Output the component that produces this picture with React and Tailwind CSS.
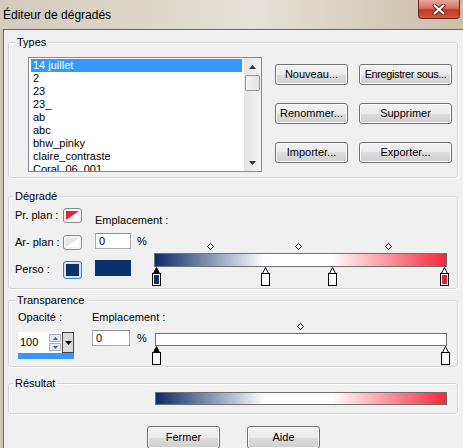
import React from "react";

const GRAD = "bg-[linear-gradient(90deg,#0a2b6a_0%,#ffffff_37.7%,#ffffff_60.6%,#f5283a_100%)]";

function Btn({ children, w = "w-[73px]", h = "h-[21px]", extra = "" }) {
  return (
    <div
      className={`${w} ${h} ${extra} flex items-center justify-center rounded-[3px] border border-[#707070] bg-[linear-gradient(#f2f2f2_0%,#ebebeb_50%,#dddddd_50%,#cfcfcf_100%)] shadow-[inset_0_0_0_1px_#fbfbfb] text-[11px] text-black whitespace-nowrap`}
    >
      {children}
    </div>
  );
}

function Group({ label, className, labelCls, children }) {
  return (
    <div
      className={`relative ml-[4px] w-[450px] shrink-0 rounded-[3px] border border-[#d5d5d5] shadow-[inset_1px_1px_0_#ffffff,1px_1px_0_#ffffff] ${className}`}
    >
      <span className={`absolute -top-[7px] ${labelCls} bg-[#f0f0f0] px-[2px] leading-[13px]`}>{label}</span>
      {children}
    </div>
  );
}

function Diamond() {
  return (
    <svg width="7" height="7" viewBox="0 0 7 7">
      <path d="M3.5 0.5 L6.5 3.5 L3.5 6.5 L0.5 3.5 Z" fill="#fff" stroke="#000" strokeWidth="1" />
    </svg>
  );
}

function Stop({ fill, selected }) {
  return (
    <svg width="9" height="19" viewBox="0 0 9 19">
      <path d="M4.5 0.5 L7.5 6.5 L1.5 6.5 Z" fill={selected ? "#000" : "#fff"} stroke="#000" strokeWidth="1" />
      <rect x="0.5" y="6.5" width="8" height="12" fill="#fff" stroke="#000" strokeWidth="1" />
      <rect x="2" y="8" width="5" height="9" fill={fill} />
    </svg>
  );
}

function Editor({ w, barH, bg, diamonds, stops, diamondOffset }) {
  return (
    <div className={`relative ${w} ${barH}`}>
      <div className={`w-full h-full border border-[#6e6e6e] ${bg}`} />
      {diamonds.map((d, i) => (
        <div key={i} className="absolute" style={{ left: d - 3.5, top: diamondOffset }}>
          <Diamond />
        </div>
      ))}
      {stops.map((s, i) => (
        <div key={i} className="absolute top-full" style={{ left: s.x - 4.5 }}>
          <Stop fill={s.fill} selected={s.sel} />
        </div>
      ))}
    </div>
  );
}

function ListBox() {
  const items = ["14 juillet", "2", "23", "23_", "ab", "abc", "bhw_pinky", "claire_contraste", "Coral_06_001"];
  return (
    <div className="w-[234px] h-[115px] border border-[#828790] bg-white flex">
      <div className="flex-1 overflow-hidden pl-[2px] pr-[2px] pt-[1px]">
        {items.map((it, i) => (
          <div
            key={i}
            className={`h-[13px] leading-[13px] px-[2px] whitespace-nowrap ${i === 0 ? "bg-[#3399ff] text-white" : "text-black"}`}
          >
            {it}
          </div>
        ))}
      </div>
      <div className="w-[17px] flex flex-col bg-[linear-gradient(90deg,#e4e4e4,#f3f3f3)]">
        <div className="h-[17px] flex items-center justify-center">
          <svg width="7" height="4" viewBox="0 0 7 4">
            <path d="M0 4 L3.5 0 L7 4 Z" fill="#333" />
          </svg>
        </div>
        <div className="mx-[1px] h-[16px] rounded-[2px] border border-[#979797] bg-[linear-gradient(90deg,#f3f3f3,#e2e2e2)]" />
        <div className="flex-1" />
        <div className="h-[17px] flex items-center justify-center">
          <svg width="7" height="4" viewBox="0 0 7 4">
            <path d="M0 0 L3.5 4 L7 0 Z" fill="#333" />
          </svg>
        </div>
      </div>
    </div>
  );
}

function Swatch({ kind }) {
  if (kind === "perso") {
    return (
      <div className="w-[19px] h-[18px] rounded-[3px] border border-[#3c7fb1] bg-[#cfe6fa] p-[2px]">
        <div className="w-full h-full border border-[#1a2e4f] bg-[#0b2f6f]" />
      </div>
    );
  }
  const tri = kind === "fg" ? "#ee2233" : "#e6e6e6";
  return (
    <div className="w-[19px] h-[15px] rounded-[3px] border border-[#8b8b8b] bg-[#f4f4f4] p-[2px]">
      <svg width="13" height="9" viewBox="0 0 13 9" className="block">
        <rect x="0" y="0" width="13" height="9" fill="#fff" />
        <path d="M0 0 L13 0 L0 9 Z" fill={tri} />
      </svg>
    </div>
  );
}

function TextBox({ w, children }) {
  return (
    <div className={`${w} h-[16px] bg-white border border-[#abadb3] border-t-[#8e9096] pl-[3px] leading-[14px]`}>
      {children}
    </div>
  );
}

function Spin() {
  return (
    <div className="mt-[2px] w-[56px] flex flex-col">
      <div className="h-[21px] flex bg-white">
        <span className="flex-1 pl-[2px] leading-[21px]">100</span>
        <div className="w-[12px] mr-[1px] flex flex-col justify-center gap-[1px]">
          <div className="h-[8px] border border-[#a9b3bf] bg-[#e3e9f0] flex items-center justify-center">
            <svg width="5" height="3" viewBox="0 0 5 3">
              <path d="M0 3 L2.5 0 L5 3 Z" fill="#555" />
            </svg>
          </div>
          <div className="h-[8px] border border-[#a9b3bf] bg-[#e3e9f0] flex items-center justify-center">
            <svg width="5" height="3" viewBox="0 0 5 3">
              <path d="M0 0 L2.5 3 L5 0 Z" fill="#555" />
            </svg>
          </div>
        </div>
        <div className="w-[12px] h-full border border-[#444] bg-[#dcdcdc] flex items-center justify-center">
          <svg width="7" height="4" viewBox="0 0 7 4">
            <path d="M0 0 L3.5 4 L7 0 Z" fill="#000" />
          </svg>
        </div>
      </div>
      <div className="h-[6px] bg-[#3399ff]" />
    </div>
  );
}

export default function App() {
  return (
    <div className="w-[463px] h-[448px] overflow-hidden flex flex-col font-['Liberation_Sans',Arial,sans-serif] text-[11px] leading-[13px] text-black bg-[#f0f0f0]">
      {/* Title bar */}
      <div className="h-[29px] shrink-0 flex items-start bg-[linear-gradient(90deg,#d3cbbd_0%,#dcd6ca_30%,#e6e2da_55%,#d6cdbc_80%,#c9bfaa_100%)]">
        <span className="pl-[3px] mt-[8px] text-[12px] leading-[15px] text-black">Éditeur de dégradés</span>
        <div className="ml-auto mr-[3px] w-[42px] h-[19px] rounded-b-[4px] border border-t-0 border-[#6b2a20] bg-[linear-gradient(#eaa99b_0%,#d8705f_45%,#c23a28_55%,#d3553f_100%)] flex items-center justify-center">
          <svg width="14" height="11" viewBox="0 0 14 11">
            <path d="M2.5 1.5 L11.5 9.5 M11.5 1.5 L2.5 9.5" stroke="#5a1d15" strokeWidth="4" strokeLinecap="round" />
            <path d="M2.5 1.5 L11.5 9.5 M11.5 1.5 L2.5 9.5" stroke="#fff" strokeWidth="2.2" strokeLinecap="round" />
          </svg>
        </div>
      </div>

      <div className="flex-1 flex">
        <div className="w-[3px] bg-[#cfc6b5]" />
        <div className="flex-1 flex flex-col border-l border-t border-[#6d6457] bg-[#f0f0f0]">
          {/* Types */}
          <Group label="Types" className="mt-[12px] h-[136px]" labelCls="left-[6px]">
            <div className="flex pl-[19px] pt-[14px]">
              <ListBox />
              <div className="ml-[13px] mt-[7px] grid grid-cols-[73px_93px] gap-x-[11px] gap-y-[18px] h-fit">
                <Btn>Nouveau...</Btn>
                <Btn w="w-[93px]" extra="tracking-[-0.4px]">Enregistrer sous...</Btn>
                <Btn>Renommer...</Btn>
                <Btn w="w-[93px]">Supprimer</Btn>
                <Btn>Importer...</Btn>
                <Btn w="w-[93px]">Exporter...</Btn>
              </div>
            </div>
          </Group>

          {/* Dégradé */}
          <Group label="Dégradé" className="mt-[18px] h-[93px]" labelCls="left-[4px]">
            <div className="flex pl-[6px]">
              <div className="flex flex-col pt-[5px]">
                <div className="h-[27px] flex items-center">
                  <span className="w-[48px]">Pr. plan :</span>
                  <Swatch kind="fg" />
                </div>
                <div className="h-[27px] flex items-center">
                  <span className="w-[48px]">Ar- plan :</span>
                  <Swatch kind="bg" />
                </div>
                <div className="h-[27px] flex items-center">
                  <span className="w-[48px]">Perso :</span>
                  <Swatch kind="perso" />
                </div>
              </div>
              <div className="ml-[13px] flex flex-col pt-[17px]">
                <span>Emplacement :</span>
                <div className="flex mt-[6px]">
                  <div className="w-[59px] flex flex-col">
                    <div className="flex items-center">
                      <TextBox w="w-[36px]">0</TextBox>
                      <span className="ml-[6px]">%</span>
                    </div>
                    <div className="mt-[11px] w-[36px] h-[16px] bg-[#0b2f6f]" />
                  </div>
                  <div className="mt-[20px]">
                    <Editor
                      w="w-[293px]"
                      barH="h-[14px]"
                      bg={GRAD}
                      diamondOffset={-10}
                      diamonds={[56, 144, 234]}
                      stops={[
                        { x: 2, fill: "#0b2f6f", sel: true },
                        { x: 111, fill: "#ffffff" },
                        { x: 178, fill: "#ffffff" },
                        { x: 290, fill: "#d9243a" },
                      ]}
                    />
                  </div>
                </div>
              </div>
            </div>
          </Group>

          {/* Transparence */}
          <Group label="Transparence" className="mt-[11px] h-[67px]" labelCls="left-[6px]">
            <div className="flex flex-col pl-[9px] pt-[10px]">
              <div className="flex">
                <span className="w-[74px]">Opacité :</span>
                <span>Emplacement :</span>
              </div>
              <div className="flex items-start mt-[6px]">
                <Spin />
                <div className="ml-[18px]">
                  <TextBox w="w-[38px]">0</TextBox>
                </div>
                <span className="ml-[7px] mt-[2px] w-[18px]">%</span>
                <div className="mt-[3px]">
                  <Editor
                    w="w-[292px]"
                    barH="h-[13px]"
                    bg="bg-white"
                    diamondOffset={-10}
                    diamonds={[145]}
                    stops={[
                      { x: 1, fill: "#ffffff", sel: true },
                      { x: 290, fill: "#ffffff" },
                    ]}
                  />
                </div>
              </div>
            </div>
          </Group>

          {/* Résultat */}
          <Group label="Résultat" className="mt-[16px] h-[31px]" labelCls="left-[4px]">
            <div className="pl-[146px] pt-[8px]">
              <div className={`w-[292px] h-[13px] border border-[#6e6e6e] ${GRAD}`} />
            </div>
          </Group>

          {/* Bottom buttons */}
          <div className="mt-[12px] flex justify-center gap-[27px]">
            <Btn h="h-[23px]">Fermer</Btn>
            <Btn h="h-[23px]">Aide</Btn>
          </div>
        </div>
      </div>
    </div>
  );
}
